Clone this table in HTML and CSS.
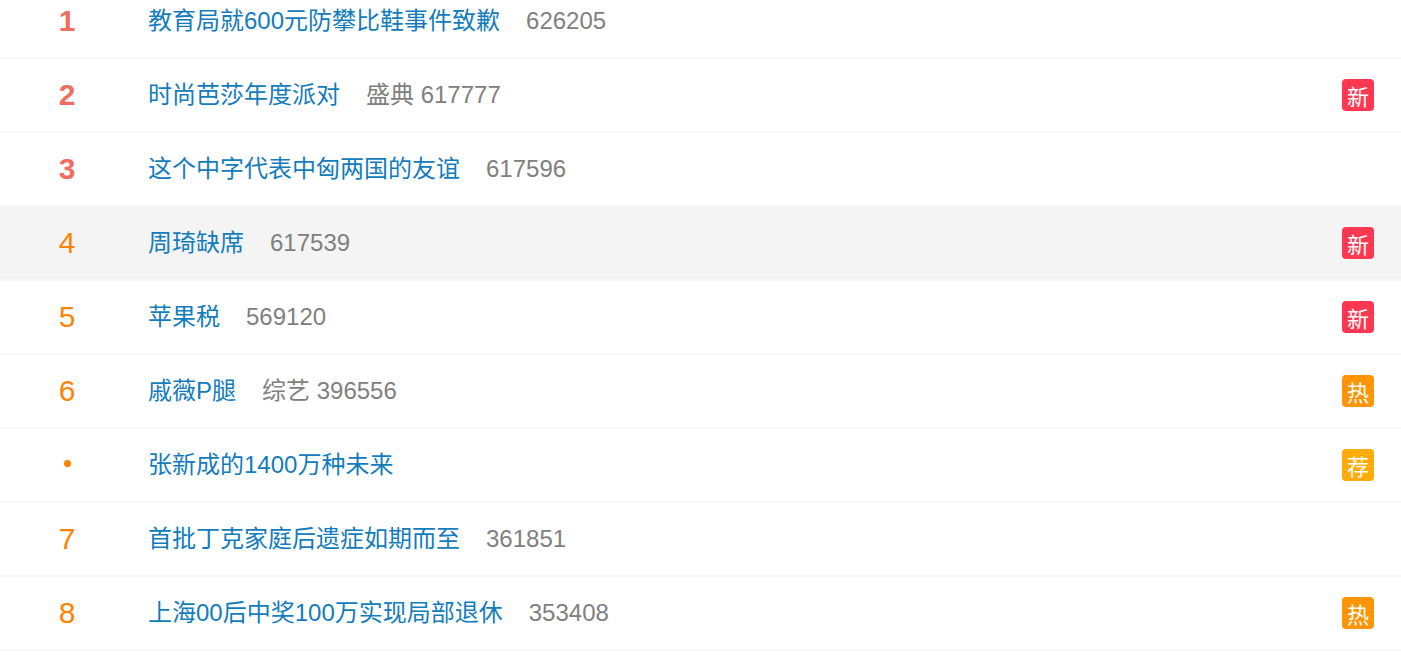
FILE: index.html
```html
<!DOCTYPE html>
<html lang="zh-CN">
<head>
  <meta charset="UTF-8" />
  <meta name="viewport" content="width=device-width, initial-scale=1" />
  <title>热搜榜</title>
  <link rel="stylesheet" href="styles.css">
</head>
<body>
  <ul class="hot-list">
    <li class="hot-row">
      <span class="rank top">1</span>
      <a class="title" href="#">教育局就600元防攀比鞋事件致歉</a>
      <span class="count">626205</span>
    </li>
    <li class="hot-row">
      <span class="rank top">2</span>
      <a class="title" href="#">时尚芭莎年度派对</a>
      <span class="count">盛典 617777</span>
      <span class="badge new">新</span>
    </li>
    <li class="hot-row">
      <span class="rank top">3</span>
      <a class="title" href="#">这个中字代表中匈两国的友谊</a>
      <span class="count">617596</span>
    </li>
    <li class="hot-row active">
      <span class="rank">4</span>
      <a class="title" href="#">周琦缺席</a>
      <span class="count">617539</span>
      <span class="badge new">新</span>
    </li>
    <li class="hot-row">
      <span class="rank">5</span>
      <a class="title" href="#">苹果税</a>
      <span class="count">569120</span>
      <span class="badge new">新</span>
    </li>
    <li class="hot-row">
      <span class="rank">6</span>
      <a class="title" href="#">戚薇P腿</a>
      <span class="count">综艺 396556</span>
      <span class="badge hot">热</span>
    </li>
    <li class="hot-row">
      <span class="rank"><i class="dot"></i></span>
      <a class="title" href="#">张新成的1400万种未来</a>
      <span class="badge rec">荐</span>
    </li>
    <li class="hot-row">
      <span class="rank">7</span>
      <a class="title" href="#">首批丁克家庭后遗症如期而至</a>
      <span class="count">361851</span>
    </li>
    <li class="hot-row">
      <span class="rank">8</span>
      <a class="title" href="#">上海00后中奖100万实现局部退休</a>
      <span class="count">353408</span>
      <span class="badge hot">热</span>
    </li>
  </ul>
</body>
</html>
```

FILE: styles.css
```css
body {
  margin: 0;
  background: #ffffff;
  font-family: "Liberation Sans", Arial, "Noto Sans CJK SC", sans-serif;
  overflow: hidden;
}

.hot-list {
  list-style: none;
  margin: -15px 0 0 0;
  padding: 0;
}

.hot-row {
  display: flex;
  align-items: center;
  height: 72px;
  border-bottom: 2px solid #f7f7f7;
  padding-right: 27px;
}

.hot-row.active {
  background: #f4f4f4;
}

.rank {
  width: 134px;
  flex-shrink: 0;
  text-align: center;
  font-size: 30px;
  line-height: 1;
  color: #ff8200;
}

.rank.top {
  color: #f26d5f;
  font-weight: bold;
}

.dot {
  display: block;
  width: 7px;
  height: 7px;
  margin: 0 auto 3px;
  border-radius: 50%;
  background: #ff8200;
}

.title {
  margin-left: 14px;
  font-size: 24px;
  line-height: 1;
  color: #137cbd;
  text-decoration: none;
  margin-bottom: 1px;
}

.count {
  margin-left: 26px;
  font-size: 24px;
  line-height: 1;
  color: #808080;
  margin-bottom: 1px;
}

.badge {
  margin-left: auto;
  width: 32px;
  height: 32px;
  border-radius: 4px;
  color: #fff;
  font-size: 22px;
  line-height: 32px;
  text-align: center;
  font-family: "Noto Sans CJK SC", sans-serif;
}

.badge.new {
  background: #ff3852;
}

.badge.hot {
  background: #ff9406;
}

.badge.rec {
  background: #ffab0a;
}
```
